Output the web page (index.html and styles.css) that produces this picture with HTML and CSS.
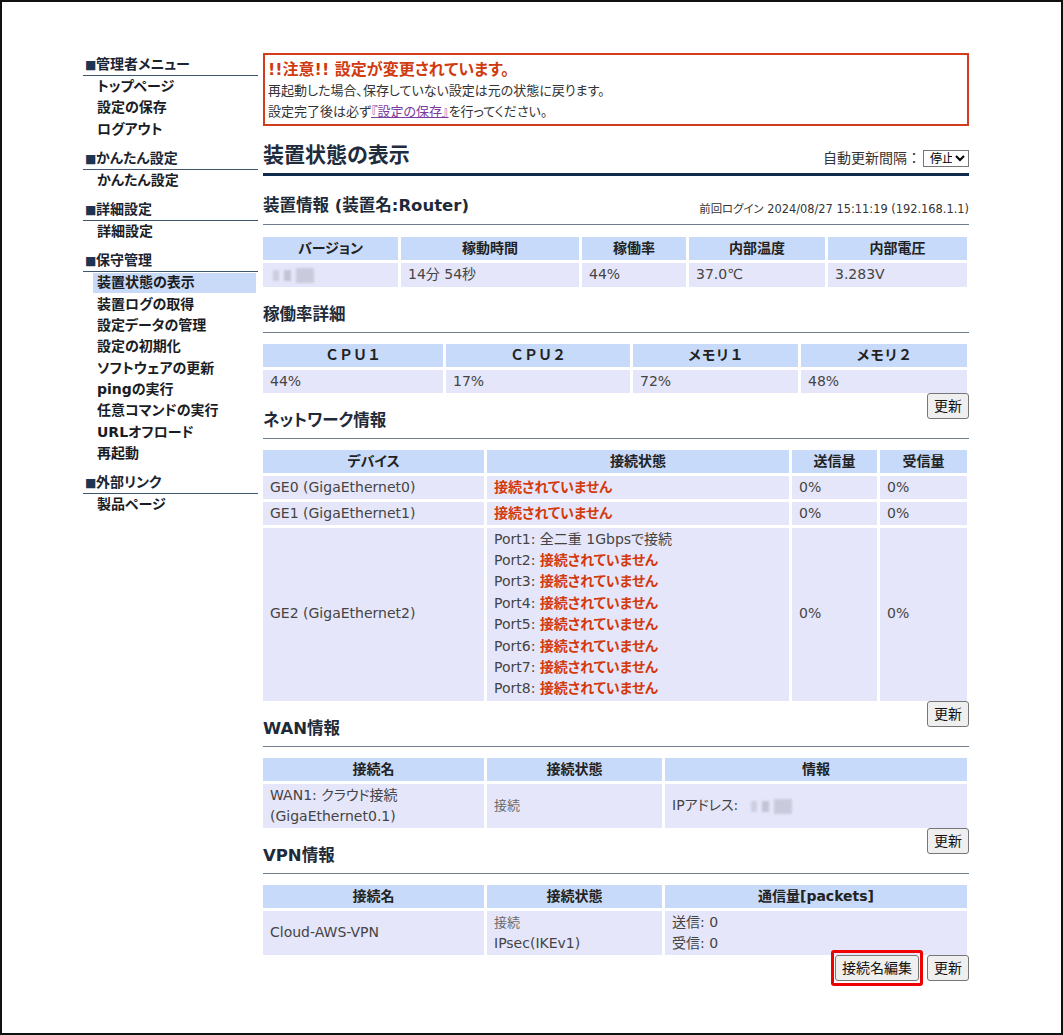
FILE: index.html
```html
<!DOCTYPE html>
<html lang="ja">
<head>
<meta charset="utf-8">
<title>装置状態の表示</title>
<link rel="stylesheet" href="styles.css">
</head>
<body>
<div class="frame">
  <div class="layout">
    <nav class="side">
      <div class="side-group">
        <div class="side-head"><span class="side-mark">■</span>管理者メニュー</div>
        <ul class="side-list">
          <li class="side-item">トップページ</li>
          <li class="side-item">設定の保存</li>
          <li class="side-item">ログアウト</li>
        </ul>
      </div>
      <div class="side-group">
        <div class="side-head"><span class="side-mark">■</span>かんたん設定</div>
        <ul class="side-list">
          <li class="side-item">かんたん設定</li>
        </ul>
      </div>
      <div class="side-group">
        <div class="side-head"><span class="side-mark">■</span>詳細設定</div>
        <ul class="side-list">
          <li class="side-item">詳細設定</li>
        </ul>
      </div>
      <div class="side-group">
        <div class="side-head"><span class="side-mark">■</span>保守管理</div>
        <ul class="side-list">
          <li class="side-item is-active">装置状態の表示</li>
          <li class="side-item">装置ログの取得</li>
          <li class="side-item">設定データの管理</li>
          <li class="side-item">設定の初期化</li>
          <li class="side-item">ソフトウェアの更新</li>
          <li class="side-item">pingの実行</li>
          <li class="side-item">任意コマンドの実行</li>
          <li class="side-item">URLオフロード</li>
          <li class="side-item">再起動</li>
        </ul>
      </div>
      <div class="side-group">
        <div class="side-head"><span class="side-mark">■</span>外部リンク</div>
        <ul class="side-list">
          <li class="side-item">製品ページ</li>
        </ul>
      </div>
    </nav>

    <main class="main">
      <div class="notice">
        <div class="notice-title">!!注意!! 設定が変更されています。</div>
        <div class="notice-line">再起動した場合、保存していない設定は元の状態に戻ります。</div>
        <div class="notice-line">設定完了後は必ず<a class="notice-link" href="#">『設定の保存』</a>を行ってください。</div>
      </div>

      <div class="page-head">
        <h1 class="page-title">装置状態の表示</h1>
        <div class="refresh">自動更新間隔：<select class="refresh-select"><option>停止</option></select></div>
      </div>

      <div class="sec-head">
        <h2 class="sec-title">装置情報 (装置名:Router)</h2>
        <div class="last-login">前回ログイン 2024/08/27 15:11:19 (192.168.1.1)</div>
      </div>
      <table class="grid grid-first">
        <colgroup><col class="c135"><col class="c178"><col class="c104"><col class="c136"><col></colgroup>
        <tr><th>バージョン</th><th>稼動時間</th><th>稼働率</th><th>内部温度</th><th>内部電圧</th></tr>
        <tr><td><span class="masked"><i class="mk mk-a"></i><i class="mk mk-b"></i><i class="mk mk-c"></i></span></td><td>14分 54秒</td><td>44%</td><td>37.0℃</td><td>3.283V</td></tr>
      </table>

      <h2 class="sec-title sec-plain">稼働率詳細</h2>
      <table class="grid">
        <colgroup><col class="c180"><col class="c184"><col class="c165"><col></colgroup>
        <tr><th class="fw">ＣＰＵ１</th><th class="fw">ＣＰＵ２</th><th class="fw">メモリ１</th><th class="fw">メモリ２</th></tr>
        <tr><td>44%</td><td>17%</td><td>72%</td><td>48%</td></tr>
      </table>
      <div class="actions"><button class="btn">更新</button></div>

      <h2 class="sec-title sec-plain">ネットワーク情報</h2>
      <table class="grid">
        <colgroup><col class="c221"><col class="c302"><col class="c85"><col></colgroup>
        <tr><th>デバイス</th><th>接続状態</th><th>送信量</th><th>受信量</th></tr>
        <tr><td>GE0 (GigaEthernet0)</td><td><span class="ng">接続されていません</span></td><td>0%</td><td>0%</td></tr>
        <tr><td>GE1 (GigaEthernet1)</td><td><span class="ng">接続されていません</span></td><td>0%</td><td>0%</td></tr>
        <tr class="ports">
          <td>GE2 (GigaEthernet2)</td>
          <td>
            <div>Port1: 全二重 1Gbpsで接続</div>
            <div>Port2: <span class="ng">接続されていません</span></div>
            <div>Port3: <span class="ng">接続されていません</span></div>
            <div>Port4: <span class="ng">接続されていません</span></div>
            <div>Port5: <span class="ng">接続されていません</span></div>
            <div>Port6: <span class="ng">接続されていません</span></div>
            <div>Port7: <span class="ng">接続されていません</span></div>
            <div>Port8: <span class="ng">接続されていません</span></div>
          </td>
          <td>0%</td><td>0%</td>
        </tr>
      </table>
      <div class="actions"><button class="btn">更新</button></div>

      <h2 class="sec-title sec-plain">WAN情報</h2>
      <table class="grid">
        <colgroup><col class="c221"><col class="c175"><col></colgroup>
        <tr><th>接続名</th><th>接続状態</th><th>情報</th></tr>
        <tr>
          <td><div>WAN1: クラウド接続</div><div>(GigaEthernet0.1)</div></td>
          <td><span class="state">接続</span></td>
          <td>IPアドレス: <span class="masked masked-ip"><i class="mk mk-a"></i><i class="mk mk-b"></i><i class="mk mk-c"></i></span></td>
        </tr>
      </table>
      <div class="actions"><button class="btn">更新</button></div>

      <h2 class="sec-title sec-plain">VPN情報</h2>
      <table class="grid">
        <colgroup><col class="c221"><col class="c175"><col></colgroup>
        <tr><th>接続名</th><th>接続状態</th><th>通信量[packets]</th></tr>
        <tr>
          <td>Cloud-AWS-VPN</td>
          <td><div class="state">接続</div><div>IPsec(IKEv1)</div></td>
          <td><div>送信: 0</div><div>受信: 0</div></td>
        </tr>
      </table>
      <div class="actions">
        <span class="highlight"><button class="btn">接続名編集</button></span>
        <button class="btn">更新</button>
      </div>
    </main>
  </div>
</div>
</body>
</html>
```

FILE: styles.css
```css
* { box-sizing: border-box; }

html, body {
  margin: 0;
  padding: 0;
  background: #fff;
}

body {
  font-family: "DejaVu Sans", "Noto Sans CJK JP", sans-serif;
  font-feature-settings: "palt";
  font-size: 14px;
  color: #333;
}

.frame {
  width: 1063px;
  height: 1035px;
  border: 2px solid #111;
  padding: 51px 0 0 81px;
  overflow: hidden;
}

.layout {
  display: flex;
  align-items: flex-start;
  gap: 5px;
}

/* ---------- sidebar ---------- */
.side {
  width: 175px;
  flex: none;
  padding-top: 1px;
}

.side-group { margin-bottom: 8px; }

.side-head {
  font-size: 14px;
  font-weight: bold;
  line-height: 20px;
  color: #1b2431;
  border-bottom: 1px solid #3f566f;
  padding-left: 2px;
}

.side-mark {
  display: inline-block;
  font-size: 12px;
  width: 11px;
  color: #1c3552;
}

.side-list {
  list-style: none;
  margin: 0;
  padding: 0;
  display: flex;
  flex-direction: column;
}

.side-item {
  margin: 1px 2px 1px 10px;
  padding-left: 4px;
  line-height: 19.3px;
  font-weight: bold;
  color: #1a1c24;
}

.side-item.is-active { background: #c9d9f8; }

/* ---------- main ---------- */
.main {
  width: 706px;
  flex: none;
}

.notice {
  border: 2px solid #d23c1c;
  padding: 4px 3px 2px;
  line-height: 21px;
}

.notice-title {
  font-size: 16px;
  font-weight: bold;
  color: #d03a10;
}

.notice-line {
  font-size: 13px;
  color: #333;
}

.notice-link {
  color: #7a3aa0;
  text-decoration: underline;
}

.page-head {
  display: flex;
  justify-content: space-between;
  align-items: flex-end;
  margin-top: 14px;
  padding-bottom: 3px;
  border-bottom: 3px solid #0e2b4d;
}

.page-title {
  margin: 0;
  font-size: 21px;
  line-height: 30px;
  font-weight: bold;
  color: #1e2c3c;
}

.refresh {
  display: flex;
  align-items: center;
  font-size: 14px;
  line-height: 20px;
  color: #333;
  padding-bottom: 2px;
  font-feature-settings: normal;
}

.refresh-select {
  width: 46px;
  height: 17px;
  margin-left: 2px;
  font-family: "DejaVu Sans", "Noto Sans CJK JP", sans-serif;
  font-size: 12px;
  padding: 0 0 0 2px;
  border: 1px solid #767676;
  border-radius: 0;
  background: #fff;
  color: #000;
}

.sec-head {
  display: flex;
  justify-content: space-between;
  align-items: flex-end;
  margin-top: 18px;
  padding-bottom: 6px;
  border-bottom: 1px solid #6f7d8c;
}

.sec-title {
  margin: 0;
  font-size: 16.5px;
  line-height: 24px;
  font-weight: bold;
  color: #1e2a38;
}

.sec-plain {
  margin-top: 14px;
  padding-top: 2px;
  padding-bottom: 5px;
  border-bottom: 1px solid #6f7d8c;
}

.last-login {
  font-size: 11.4px;
  line-height: 15px;
  color: #333;
  padding-bottom: 1px;
}

/* ---------- tables ---------- */
.grid {
  width: calc(100% + 4px);
  margin: 8px 0 -3px -3px;
  border-collapse: separate;
  border-spacing: 3px;
  table-layout: fixed;
}

.grid-first { margin-top: 9px; }

.grid th {
  background: #c8daf9;
  color: #222;
  font-weight: bold;
  font-size: 14px;
  line-height: 21px;
  padding: 1px 7px;
  text-align: center;
}

.grid th.fw { font-feature-settings: normal; }

.grid td {
  background: #e6e6fa;
  color: #444;
  font-size: 14px;
  line-height: 21px;
  padding: 1px 7px;
  vertical-align: middle;
  text-align: left;
}

.ports td { line-height: 21.4px; }

.c135 { width: 135px; }
.c178 { width: 178px; }
.c104 { width: 104px; }
.c136 { width: 136px; }
.c180 { width: 180px; }
.c184 { width: 184px; }
.c165 { width: 165px; }
.c221 { width: 221px; }
.c302 { width: 302px; }
.c85 { width: 85px; }
.c175 { width: 175px; }

.ng {
  color: #d23a0e;
  font-weight: bold;
}

.state {
  font-size: 13px;
  color: #6a6a6a;
}

.masked {
  display: inline-flex;
  align-items: center;
  gap: 5px;
  vertical-align: middle;
  height: 21px;
  padding-left: 3px;
}

.masked-ip { padding-left: 8px; }

.mk {
  display: block;
  height: 11px;
  background: #c4c4d6;
  filter: blur(1.2px);
}

.mk-a { width: 6px; opacity: 0.7; }
.mk-b { width: 7px; }
.mk-c { width: 18px; height: 15px; opacity: 0.8; }

/* ---------- buttons ---------- */
.actions {
  float: right;
  display: flex;
  align-items: center;
  gap: 4px;
}

.btn {
  font-family: "DejaVu Sans", "Noto Sans CJK JP", sans-serif;
  font-feature-settings: "palt";
  font-size: 14px;
  line-height: 20px;
  padding: 2px 6px;
  border: 1px solid #767676;
  border-radius: 3px;
  background: #efefef;
  color: #111;
}

.highlight {
  display: inline-flex;
  margin: -5px 0;
  padding: 2px 1px;
  border: 3px solid #f00000;
  border-radius: 3px;
}
```
